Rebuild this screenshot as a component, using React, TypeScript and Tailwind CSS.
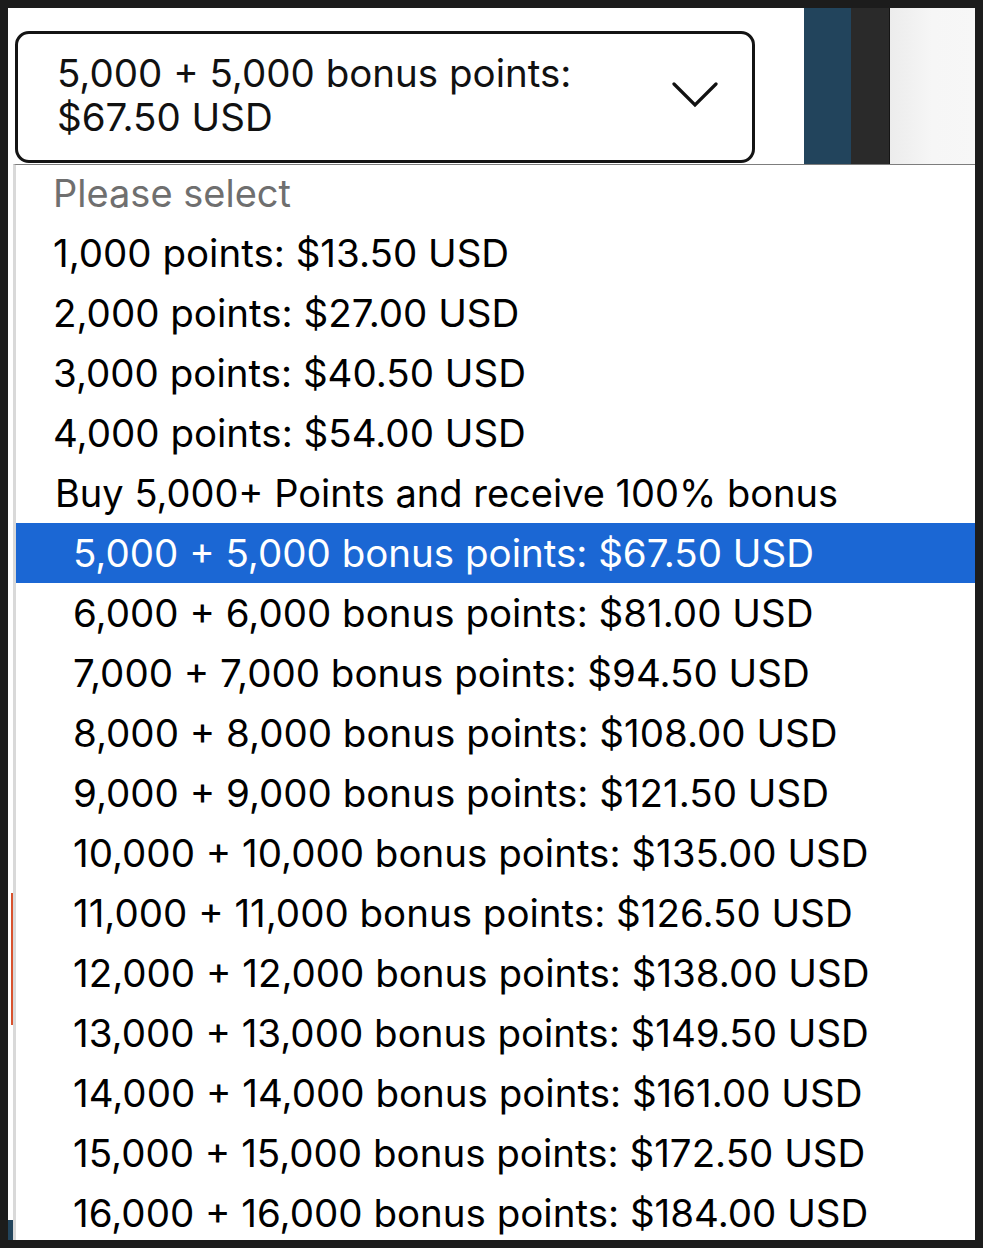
const plainOptions = [
  "1,000 points: $13.50 USD",
  "2,000 points: $27.00 USD",
  "3,000 points: $40.50 USD",
  "4,000 points: $54.00 USD",
];

const bonusOptions = [
  "5,000 + 5,000 bonus points: $67.50 USD",
  "6,000 + 6,000 bonus points: $81.00 USD",
  "7,000 + 7,000 bonus points: $94.50 USD",
  "8,000 + 8,000 bonus points: $108.00 USD",
  "9,000 + 9,000 bonus points: $121.50 USD",
  "10,000 + 10,000 bonus points: $135.00 USD",
  "11,000 + 11,000 bonus points: $126.50 USD",
  "12,000 + 12,000 bonus points: $138.00 USD",
  "13,000 + 13,000 bonus points: $149.50 USD",
  "14,000 + 14,000 bonus points: $161.00 USD",
  "15,000 + 15,000 bonus points: $172.50 USD",
  "16,000 + 16,000 bonus points: $184.00 USD",
];

const selected = bonusOptions[0];

function Chevron() {
  return (
    <svg width="46" height="28" viewBox="0 0 46 28" fill="none" className="shrink-0">
      <path d="M2 3 L23 24 L44 3" stroke="#111" strokeWidth="3.2" strokeLinecap="round" strokeLinejoin="miter" />
    </svg>
  );
}

export default function App() {
  return (
    <div className="w-[983px] h-[1248px] bg-[#1c1c1c] p-[8px] overflow-hidden font-['Inter',sans-serif]">
      <div className="flex h-full flex-col bg-white overflow-hidden">
        {/* page behind the open select */}
        <div className="flex h-[156px] shrink-0">
          <div className="flex-1 pl-[7px] pt-[23px]">
            <div className="flex h-[132px] w-[740px] items-center rounded-[14px] border-[3px] border-[#141414] bg-white pb-[4px] pl-[39px] pr-[36px]">
              <div className="flex-1 text-[38.5px] leading-[44px] text-[#111]">
                5,000 + 5,000 bonus points:
                <br />
                $67.50 USD
              </div>
              <div className="-mr-[2px]">
                <Chevron />
              </div>
            </div>
          </div>
          <div className="w-[47px] bg-[#22445c]" />
          <div className="w-[39px] border-r border-[#151515] bg-[#2a2a2a]" />
          <div className="w-[85px] bg-gradient-to-r from-[#ececec] via-[#f6f6f6] to-[#f7f7f7]" />
        </div>

        <div className="flex min-h-0 flex-1">
          {/* left strip of the page, peeking out */}
          <div className="flex w-[5px] flex-col">
            <div className="flex-1" />
            <div className="h-[132px] w-[2px] self-end bg-[#d8522e]" />
            <div className="h-[195px]" />
            <div className="h-[20px] bg-[#22445c]" />
          </div>

          {/* native dropdown list */}
          <div className="flex-1 overflow-hidden border-t border-l-[3px] border-t-[#7d7d7d] border-l-[#d9d9d9] bg-white text-[38.5px] leading-[60px] text-black">
            <div className="-mt-[2px]">
              <div className="h-[60px] pl-[37px] text-[38px] text-[#6f6f6f]">Please select</div>
              {plainOptions.map((o) => (
                <div key={o} className="h-[60px] pl-[37px] whitespace-nowrap">
                  {o}
                </div>
              ))}
              <div className="h-[60px] pl-[39px] text-[38px] whitespace-nowrap">Buy 5,000+ Points and receive 100% bonus</div>
              {bonusOptions.map((o) => (
                <div
                  key={o}
                  className={
                    o === selected
                      ? "h-[60px] pl-[57px] whitespace-nowrap bg-[#1b67d4] text-white"
                      : "h-[60px] pl-[57px] whitespace-nowrap"
                  }
                >
                  {o}
                </div>
              ))}
            </div>
          </div>
        </div>
      </div>
    </div>
  );
}
